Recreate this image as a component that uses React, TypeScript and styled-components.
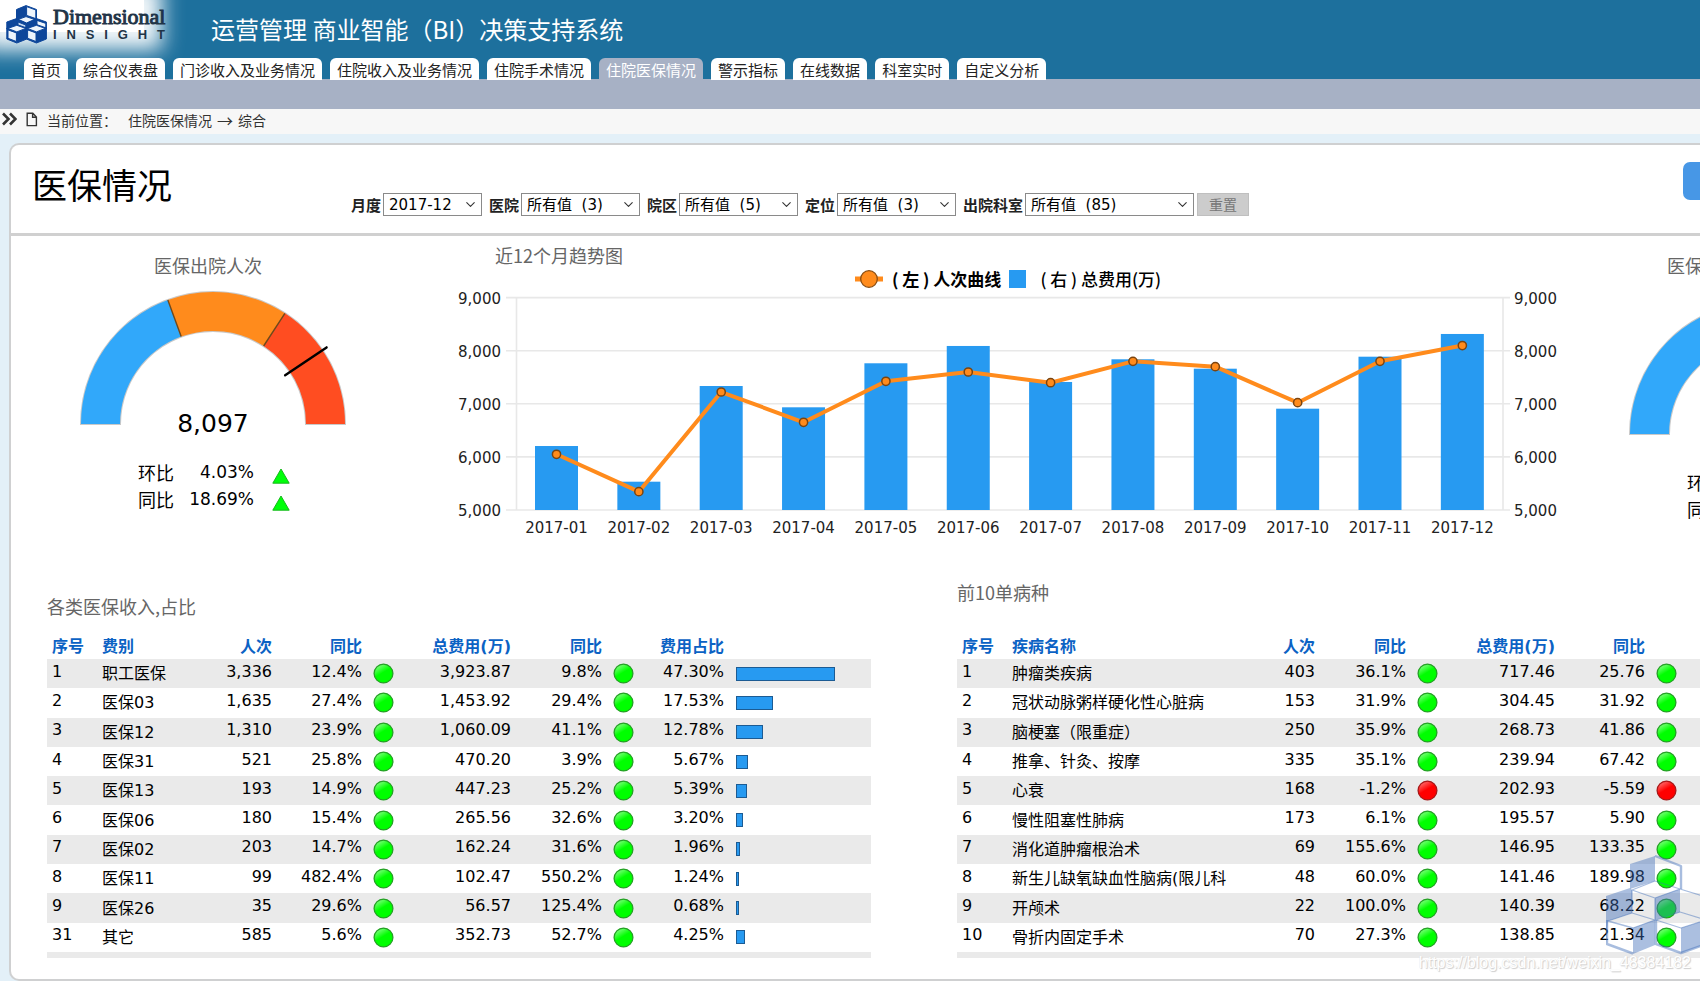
import React, { useId } from 'react';
import styled, { createGlobalStyle } from 'styled-components';
import { ChevronDown } from 'lucide-react';

const han = '"Noto Sans CJK SC", sans-serif';
const mixed = '"DejaVu Sans", "Noto Sans CJK SC", sans-serif';

const GlobalStyle = createGlobalStyle`
  * { box-sizing: border-box; }
  body {
    margin: 0;
    background: #e3f0f8;
    color: #000;
    font-family: ${han};
    overflow: hidden;
  }
  h1, h2, p { margin: 0; font-weight: 400; }
`;

const Page = styled.div`
  position: relative;
  overflow: hidden;
`;

/* ---------- header ---------- */

const Header = styled.header`
  display: flex;
  flex-direction: column;
  background: #1d709d;
`;

const Brand = styled.div`
  display: flex;
  height: 58px;
`;

const Logo = styled.div`
  display: flex;
  gap: 6px;
  width: 144px;
  height: 32px;
  padding: 5px 0 0 6px;
  background: #fff;
  box-shadow: 0 0 20px 18px rgba(255, 255, 255, 0.95);
`;

const LogoCubes = styled.svg`
  flex: none;
  width: 41px;
  height: 39px;
`;

const LogoText = styled.div`
  flex: none;
  width: 112px;
  color: #1f3447;
`;

const LogoName = styled.p`
  font: 22px/24px "Liberation Serif", serif;
  -webkit-text-stroke: 1px #1f3447;
`;

const LogoSub = styled.p`
  display: flex;
  justify-content: space-between;
  font: bold 13px/12px "Liberation Sans", sans-serif;
`;

const SystemName = styled.h1`
  margin-left: 67px;
  color: #fff;
  font-size: 24px;
  line-height: 58px;
`;

const Tabs = styled.nav`
  display: flex;
  gap: 8px;
  height: 21px;
  padding-left: 24px;
`;

const Tab = styled.a<{ $active?: boolean }>`
  height: ${(p) => (p.$active ? 21 : 22)}px;
  padding: 0 7px;
  border-radius: 6px 6px 0 0;
  background: ${(p) => (p.$active ? '#a7b1c5' : '#fff')};
  color: ${(p) => (p.$active ? '#fff' : '#222')};
  font-size: 15px;
  line-height: 24px;
  text-decoration: none;
  white-space: nowrap;
`;

const SubBar = styled.div`
  height: 30px;
  background: #a7b1c5;
`;

const Crumbs = styled.div`
  display: flex;
  align-items: center;
  height: 25px;
  padding: 0 0 3px 2px;
  background: #f7f7f7;
  color: #333;
  font-size: 14px;
  line-height: 20px;
`;

const CrumbIcon = styled.svg`
  flex: none;
  margin-right: 9px;
  margin-bottom: 2px;
`;

const CrumbPath = styled.span`
  display: flex;
  gap: 5px;
  margin-left: 11px;
`;

const CrumbArrow = styled.span`
  font-size: 16px;
`;

/* ---------- card ---------- */

const Card = styled.main`
  margin: 9px 0 1px 9px;
  border: 2px solid #cfd0d1;
  border-right: 0;
  border-radius: 10px 0 0 10px;
  background: #fff;
  overflow: hidden;
`;

const CardHead = styled.div`
  display: flex;
  height: 91px;
  padding-left: 21px;
  border-bottom: 3px solid #d0d0d0;
`;

const CardTitle = styled.h1`
  flex: none;
  width: 319px;
  font-size: 35px;
  line-height: 78px;
`;

const Filters = styled.form`
  display: flex;
  flex: none;
  align-items: center;
  gap: 7px;
  height: 23px;
  margin-top: 48px;
`;

const Filter = styled.label`
  display: flex;
  align-items: center;
  gap: 2px;
  font-size: 15px;
  font-weight: 700;
  line-height: 22px;
  color: #222;
`;

const SelectBox = styled.span<{ $w: number }>`
  position: relative;
  display: flex;
  width: ${(p) => p.$w}px;
  height: 23px;

  svg {
    position: absolute;
    right: 4px;
    top: 4px;
    pointer-events: none;
  }
`;

const Select = styled.select`
  appearance: none;
  width: 100%;
  padding: 0 5px;
  border: 1px solid #8a8a8a;
  border-radius: 0;
  background: #fff;
  color: #000;
  font: 15px/20px ${mixed};
`;

const ResetButton = styled.button`
  width: 52px;
  height: 23px;
  margin-left: -4px;
  padding: 0 0 2px;
  border: 1px solid #bfbfbf;
  background: #ccc;
  color: #777;
  font: 14px/20px ${han};
`;

const ActionButton = styled.button`
  flex: none;
  width: 64px;
  height: 38px;
  margin: 17px -47px 0 auto;
  border: 0;
  border-radius: 7px;
  background: #4797e6;
`;

const ChartRow = styled.div`
  display: grid;
  grid-template-columns: 440px minmax(0, 1fr) 132px;
  height: 344px;
`;

const PanelTitle = styled.h2`
  color: #666;
  font-size: 18px;
  line-height: 24px;
  white-space: nowrap;
`;

/* ---------- gauge ---------- */

const GaugePanel = styled.section<{ $left: number }>`
  padding: 17px 0 0 ${(p) => p.$left}px;
`;

const GaugeTitle = styled(PanelTitle)<{ $indent: number }>`
  padding-left: ${(p) => p.$indent}px;
`;

const GaugeDrawing = styled.svg<{ $drop: number }>`
  display: block;
  margin-top: ${(p) => 14 + p.$drop}px;
`;

const GaugeStats = styled.dl`
  display: grid;
  grid-template-columns: 36px 80px 18px;
  align-items: center;
  margin: 12px 0 0 58px;
  font: 17px/27px ${mixed};

  dt { font: 18px/27px ${han}; }
  dd { margin: 0; text-align: right; }
  svg { display: block; margin: 7px 0 0 18px; }
`;

const rad = (deg: number) => (deg * Math.PI) / 180;
const at = (r: number, deg: number) =>
  `${(133 + r * Math.cos(rad(deg))).toFixed(2)} ${(133 - r * Math.sin(rad(deg))).toFixed(2)}`;
const ring = (from: number, to: number) =>
  `M${at(132, from)}A132 132 0 0 1 ${at(132, to)}L${at(93, to)}A93 93 0 0 0 ${at(93, from)}Z`;

type GaugeProps = {
  title: string;
  value: string;
  left: number;
  indent: number;
  drop?: number;
  stats: [string, string][];
};

function Gauge({ title, value, left, indent, drop = 0, stats }: GaugeProps) {
  return (
    <GaugePanel $left={left}>
      <GaugeTitle $indent={indent}>{title}</GaugeTitle>
      <GaugeDrawing $drop={drop} width="266" height="156" viewBox="0 0 266 156">
        <path d={ring(180, 0)} fill="#d9d9d9" stroke="#c9c9c9" strokeWidth="2" />
        <path d={ring(180, 110)} fill="#31a8fa" />
        <path d={ring(110, 57)} fill="#ff8b1c" />
        <path d={ring(57, 0)} fill="#ff4d21" />
        <path d={`M${at(132, 110)}L${at(93, 110)}M${at(132, 57)}L${at(93, 57)}`} stroke="#70491b" strokeWidth="1.4" />
        <path d={`M${at(137, 34)}L${at(87, 34)}`} stroke="#000" strokeWidth="2.4" strokeLinecap="round" />
        <text x="133" y="141" textAnchor="middle" fontFamily="DejaVu Sans, sans-serif" fontSize="25">
          {value}
        </text>
      </GaugeDrawing>
      <GaugeStats>
        {stats.map(([name, amount]) => (
          <React.Fragment key={name}>
            <dt>{name}</dt>
            <dd>{amount}</dd>
            <svg width="18" height="16" viewBox="0 0 18 16">
              <path d="M9 1L17.2 15.2H.8Z" fill="#00ff0a" stroke="#17b81c" strokeWidth="1" />
            </svg>
          </React.Fragment>
        ))}
      </GaugeStats>
    </GaugePanel>
  );
}

/* ---------- trend chart ---------- */

const TrendPanel = styled.section`
  padding-top: 7px;
`;

const TrendTitle = styled(PanelTitle)`
  padding-left: 44px;
`;

const Legend = styled.div`
  display: flex;
  justify-content: center;
  align-items: center;
  gap: 8px;
  height: 24px;
  padding-right: 4px;
  font-size: 17px;
  line-height: 22px;
`;

const LegendItem = styled.span<{ $weight: number; $gap: number }>`
  display: flex;
  align-items: center;
  gap: ${(p) => p.$gap}px;
  font-weight: ${(p) => p.$weight};
`;

const TrendDrawing = styled.svg`
  display: block;
  width: 100%;
  height: auto;
`;

const cost = [6205, 5533, 7335, 6934, 7763, 8089, 7411, 7838, 7661, 6908, 7887, 8315];
const visits = [6049, 5345, 7222, 6652, 7424, 7599, 7397, 7800, 7699, 7021, 7800, 8097];
const yOf = (v: number) => 219 - ((v - 5000) / 1000) * 53.1;
const xOf = (i: number) => 105.5 + i * 82.35;

function Trend() {
  return (
    <TrendPanel>
      <TrendTitle>近12个月趋势图</TrendTitle>
      <Legend>
        <LegendItem $weight={700} $gap={8}>
          <svg width="30" height="20" viewBox="0 0 30 20">
            <path d="M1 10H29" stroke="#ff8b1c" strokeWidth="5" />
            <circle cx="15" cy="10" r="8.3" fill="#ff8b1c" stroke="#8a4d12" strokeWidth="1.3" />
          </svg>
          ( 左 ) 人次曲线
        </LegendItem>
        <LegendItem $weight={500} $gap={14}>
          <svg width="17" height="18" viewBox="0 0 17 18">
            <path d="M0 0H17V18H0Z" fill="#279af1" />
          </svg>
          ( 右 ) 总费用(万)
        </LegendItem>
      </Legend>
      <TrendDrawing viewBox="0 0 1117 250" fontFamily="DejaVu Sans, sans-serif" fontSize="15" fill="#222">
        <g stroke="#e8e8e8" strokeWidth="1.6">
          {[5000, 6000, 7000, 8000, 9000].map((v) => (
            <path key={v} d={`M55 ${yOf(v)}H1059`} />
          ))}
          <path d="M65.5 6.6V219M1052 6.6V219" />
        </g>
        {[5000, 6000, 7000, 8000, 9000].map((v) => (
          <g key={v}>
            <text x="50" y={yOf(v) + 6} textAnchor="end">{v.toLocaleString('en-US')}</text>
            <text x="1063" y={yOf(v) + 6}>{v.toLocaleString('en-US')}</text>
          </g>
        ))}
        {cost.map((v, i) => (
          <g key={i}>
            <rect x={xOf(i) - 21.5} y={yOf(v)} width="43" height={219 - yOf(v)} fill="#279af1" />
            <text x={xOf(i)} y="242" textAnchor="middle">{`2017-${String(i + 1).padStart(2, '0')}`}</text>
          </g>
        ))}
        <polyline
          points={visits.map((v, i) => `${xOf(i)},${yOf(v)}`).join(' ')}
          fill="none"
          stroke="#ff8b1c"
          strokeWidth="4"
          strokeLinejoin="round"
        />
        {visits.map((v, i) => (
          <circle key={i} cx={xOf(i)} cy={yOf(v)} r="4.1" fill="#ff8b1c" stroke="#7a4410" strokeWidth="1.5" />
        ))}
      </TrendDrawing>
    </TrendPanel>
  );
}

/* ---------- tables ---------- */

const TableRow = styled.div`
  display: grid;
  grid-template-columns: 824px minmax(0, 1fr);
  column-gap: 86px;
  padding: 0 0 21px 36px;
`;

const TablePanel = styled.section<{ $top: number; $gap: number }>`
  display: flex;
  flex-direction: column;
  gap: ${(p) => p.$gap}px;
  padding-top: ${(p) => p.$top}px;
`;

const Table = styled.table`
  table-layout: fixed;
  width: 100%;
  height: 323px;
  border-collapse: separate;
  border-spacing: 0;
  border-bottom: 6px solid #eaeaea;

  thead tr { height: 24px; }
  tbody tr { height: 29px; }
  tbody tr:nth-child(odd) { background: #eaeaea; }
`;

const Th = styled.th<{ $right?: boolean }>`
  padding: 0 0 0 ${(p) => (p.$right ? 0 : 5)}px;
  color: #0b62c4;
  font: bold 16px/22px ${mixed};
  text-align: ${(p) => (p.$right ? 'right' : 'left')};
  white-space: nowrap;
`;

const Name = styled.td`
  padding: 1px 0 0 5px;
  font: 16px/24px ${mixed};
  white-space: nowrap;
`;

const Num = styled.td<{ $left?: boolean }>`
  padding: 0 0 4px ${(p) => (p.$left ? 5 : 0)}px;
  font: 16px/20px "DejaVu Sans", sans-serif;
  text-align: ${(p) => (p.$left ? 'left' : 'right')};
`;

const Mark = styled.td`
  padding: 0 0 0 11px;

  svg { display: block; }
`;

const ShareBar = styled.div`
  height: 14px;
  margin-left: 11px;
  border: 1px solid #1c5b93;
  background: #279af1;
`;

function Dot({ red }: { red?: boolean }) {
  const id = useId();
  return (
    <svg width="21" height="21" viewBox="0 0 21 21">
      <defs>
        <linearGradient id={id} x1="0.2" y1="0" x2="0.8" y2="1">
          <stop offset="0" stopColor={red ? '#ff7a7a' : '#8dff8d'} />
          <stop offset="0.45" stopColor={red ? '#ff0000' : '#00ff00'} />
        </linearGradient>
      </defs>
      <circle cx="10.5" cy="10.5" r="9.4" fill={`url(#${id})`} stroke={red ? '#a81818' : '#25a025'} strokeWidth="1.3" />
    </svg>
  );
}

type IncomeRow = [string, string, string, string, string, string, number];
const income: IncomeRow[] = [
  ['1', '职工医保', '3,336', '12.4%', '3,923.87', '9.8%', 47.3],
  ['2', '医保03', '1,635', '27.4%', '1,453.92', '29.4%', 17.53],
  ['3', '医保12', '1,310', '23.9%', '1,060.09', '41.1%', 12.78],
  ['4', '医保31', '521', '25.8%', '470.20', '3.9%', 5.67],
  ['5', '医保13', '193', '14.9%', '447.23', '25.2%', 5.39],
  ['6', '医保06', '180', '15.4%', '265.56', '32.6%', 3.2],
  ['7', '医保02', '203', '14.7%', '162.24', '31.6%', 1.96],
  ['8', '医保11', '99', '482.4%', '102.47', '550.2%', 1.24],
  ['9', '医保26', '35', '29.6%', '56.57', '125.4%', 0.68],
  ['31', '其它', '585', '5.6%', '352.73', '52.7%', 4.25],
];

const diseases: string[][] = [
  ['1', '肿瘤类疾病', '403', '36.1%', '717.46', '25.76'],
  ['2', '冠状动脉粥样硬化性心脏病', '153', '31.9%', '304.45', '31.92'],
  ['3', '脑梗塞（限重症）', '250', '35.9%', '268.73', '41.86'],
  ['4', '推拿、针灸、按摩', '335', '35.1%', '239.94', '67.42'],
  ['5', '心衰', '168', '-1.2%', '202.93', '-5.59'],
  ['6', '慢性阻塞性肺病', '173', '6.1%', '195.57', '5.90'],
  ['7', '消化道肿瘤根治术', '69', '155.6%', '146.95', '133.35'],
  ['8', '新生儿缺氧缺血性脑病(限儿科', '48', '60.0%', '141.46', '189.98'],
  ['9', '开颅术', '22', '100.0%', '140.39', '68.22'],
  ['10', '骨折内固定手术', '70', '27.3%', '138.85', '21.34'],
];

const Col = styled.col<{ $w?: number }>`
  width: ${(p) => (p.$w ? `${p.$w}px` : 'auto')};
`;

function IncomeTable() {
  return (
    <Table>
      <colgroup>
        {[50, 115, 60, 90, 45, 104, 91, 44, 78].map((w, i) => <Col key={i} $w={w} />)}
        <Col />
      </colgroup>
      <thead>
        <tr>
          <Th>序号</Th>
          <Th>费别</Th>
          <Th $right>人次</Th>
          <Th $right>同比</Th>
          <td />
          <Th $right>总费用(万)</Th>
          <Th $right>同比</Th>
          <td />
          <Th $right>费用占比</Th>
          <td />
        </tr>
      </thead>
      <tbody>
        {income.map(([no, name, count, yoy, fee, feeYoy, share]) => (
          <tr key={no}>
            <Num $left>{no}</Num>
            <Name>{name}</Name>
            <Num>{count}</Num>
            <Num>{yoy}</Num>
            <Mark><Dot /></Mark>
            <Num>{fee}</Num>
            <Num>{feeYoy}</Num>
            <Mark><Dot /></Mark>
            <Num>{share.toFixed(2)}%</Num>
            <td><ShareBar style={{ width: Math.max(3, Math.round(share * 2.1)) }} /></td>
          </tr>
        ))}
      </tbody>
    </Table>
  );
}

function DiseaseTable() {
  return (
    <Table>
      <colgroup>
        {[50, 243, 65, 91, 44, 105, 90].map((w, i) => <Col key={i} $w={w} />)}
        <Col />
      </colgroup>
      <thead>
        <tr>
          <Th>序号</Th>
          <Th>疾病名称</Th>
          <Th $right>人次</Th>
          <Th $right>同比</Th>
          <td />
          <Th $right>总费用(万)</Th>
          <Th $right>同比</Th>
          <td />
        </tr>
      </thead>
      <tbody>
        {diseases.map(([no, name, count, yoy, fee, feeYoy]) => (
          <tr key={no}>
            <Num $left>{no}</Num>
            <Name>{name}</Name>
            <Num>{count}</Num>
            <Num>{yoy}</Num>
            <Mark><Dot red={yoy.startsWith('-')} /></Mark>
            <Num>{fee}</Num>
            <Num>{feeYoy}</Num>
            <Mark><Dot red={feeYoy.startsWith('-')} /></Mark>
          </tr>
        ))}
      </tbody>
    </Table>
  );
}

/* ---------- overlays ---------- */

const CubeMark = styled.svg`
  position: absolute;
  right: -26px;
  bottom: 27px;
  pointer-events: none;
`;

const SourceMark = styled.p`
  position: absolute;
  right: 9px;
  bottom: 7px;
  color: #fff;
  font: 16px/24px "Liberation Sans", sans-serif;
  text-shadow: 1px 1px 1px #ccc, 0 0 1px #ddd;
  pointer-events: none;
`;

const tabs = [
  '首页', '综合仪表盘', '门诊收入及业务情况', '住院收入及业务情况', '住院手术情况',
  '住院医保情况', '警示指标', '在线数据', '科室实时', '自定义分析',
];

const filters: [string, string, number][] = [
  ['月度', '2017-12', 99],
  ['医院', '所有值\u00a0 (3)', 119],
  ['院区', '所有值\u00a0 (5)', 119],
  ['定位', '所有值\u00a0 (3)', 119],
  ['出院科室', '所有值\u00a0 (85)', 169],
];

/* One isometric block of the company sign, by its top-left corner. */
function Block({ x, y }: { x: number; y: number }) {
  return (
    <g transform={`translate(${x} ${y})`} stroke="#0d469a" strokeWidth="1" strokeLinejoin="round">
      <path d="M0 3.5L10 0L20 3.5V14.5L10 18.5L0 14.5Z" fill="#0d469a" />
      <path d="M1 3.9L10 .8L19 3.9L10 7.4Z" fill="#eef5fc" />
      <path d="M1.2 5.4L9.6 8.4V17L1.2 13.8Z" fill="#eef5fc" />
    </g>
  );
}

export default function App() {
  return (
    <Page>
      <GlobalStyle />
      <Header>
        <Brand>
          <Logo>
            <LogoCubes viewBox="0 0 41 39">
              <g stroke="#0d469a" strokeWidth="1" strokeLinejoin="round">
                <path d="M10.5 4.5L20 .6L30.5 4.5V18L20 20L10.5 18Z" fill="#0d469a" />
                <path d="M20.6 1.6L29.8 5V13.6L20.6 10.4Z" fill="#eef5fc" />
                <path d="M11.2 14.8L20 11.6L29.6 14.8L20.6 18.4Z" fill="#eef5fc" />
                <path d="M.8 17L10.5 13.6L20.5 18L30.5 13.6L40.4 17V24H.8Z" fill="#0d469a" />
                <path d="M12 17L19.8 20V27L12 24Z" fill="#c6d9ef" />
                <path d="M31 15.4L39.8 18.4V24L31 21.4Z" fill="#eef5fc" />
              </g>
              <Block x={0.8} y={19.5} />
              <Block x={20.4} y={19.5} />
            </LogoCubes>
            <LogoText>
              <LogoName>Dimensional</LogoName>
              <LogoSub>
                {[...'INSIGHT'].map((c, i) => <span key={i}>{c}</span>)}
              </LogoSub>
            </LogoText>
          </Logo>
          <SystemName>运营管理 商业智能（BI）决策支持系统</SystemName>
        </Brand>
        <Tabs>
          {tabs.map((t) => (
            <Tab key={t} href="#" $active={t === '住院医保情况'}>{t}</Tab>
          ))}
        </Tabs>
      </Header>
      <SubBar />
      <Crumbs>
        <CrumbIcon width="15" height="14" viewBox="0 0 15 14">
          <path d="M1 1.5L6.5 7L1 12.5M8 1.5L13.5 7L8 12.5" fill="none" stroke="#333" strokeWidth="2.6" />
        </CrumbIcon>
        <CrumbIcon width="12" height="15" viewBox="0 0 12 15">
          <path d="M1.2 1.2H6.8L10.4 5V13.6H1.2ZM6.6 1.2V5.2H10.4" fill="none" stroke="#333" strokeWidth="1.4" />
        </CrumbIcon>
        当前位置：
        <CrumbPath>
          住院医保情况<CrumbArrow>→</CrumbArrow>综合
        </CrumbPath>
      </Crumbs>

      <Card>
        <CardHead>
          <CardTitle>医保情况</CardTitle>
          <Filters>
            {filters.map(([label, value, w]) => (
              <Filter key={label}>
                {label}
                <SelectBox $w={w}>
                  <Select>
                    <option>{value}</option>
                  </Select>
                  <ChevronDown size={15} strokeWidth={1.7} color="#333" />
                </SelectBox>
              </Filter>
            ))}
            <ResetButton type="button">重置</ResetButton>
          </Filters>
          <ActionButton type="button" aria-label="更多" />
        </CardHead>

        <ChartRow>
          <Gauge
            title="医保出院人次"
            value="8,097"
            left={69}
            indent={74}
            stats={[['环比', '4.03%'], ['同比', '18.69%']]}
          />
          <Trend />
          <Gauge
            title="医保总费用(万)"
            value="8,315"
            left={61}
            indent={38}
            drop={10}
            stats={[['环比', '5.43%'], ['同比', '21.02%']]}
          />
        </ChartRow>

        <TableRow>
          <TablePanel $top={14} $gap={17}>
            <PanelTitle>各类医保收入,占比</PanelTitle>
            <IncomeTable />
          </TablePanel>
          <TablePanel $top={0} $gap={31}>
            <PanelTitle>前10单病种</PanelTitle>
            <DiseaseTable />
          </TablePanel>
        </TableRow>
      </Card>

      <CubeMark width="120" height="100" viewBox="0 0 120 100">
        <g fill="#3f6db8" fillOpacity="0.44">
          <path d="M24 9L49 1V26L24 34Z" />
          <path d="M0 41L24 33L26 35V58L2 66L0 89Z" />
          <path d="M49 43L74 34V57L49 65Z" />
          <path d="M27 73L49 65V90L27 99Z" />
          <path d="M75 73L100 65V89L75 98Z" />
        </g>
        <g fill="none" stroke="#3f6db8" strokeOpacity="0.45" strokeLinejoin="round">
          <path d="M49 1L75 11V34M1 65V89L27 98.5M50 65V89L75 98L100 89" strokeWidth="2.4" />
          <path d="M26 35L49 26L74 34L49 43ZM49 43V65M2 66L26 58L49 65L27 73ZM26 35V58M50 65L74 57L100 65L75 73ZM74 34L100 42V65" strokeWidth="1.3" />
        </g>
      </CubeMark>
      <SourceMark>https://blog.csdn.net/weixin_48384182</SourceMark>
    </Page>
  );
}
